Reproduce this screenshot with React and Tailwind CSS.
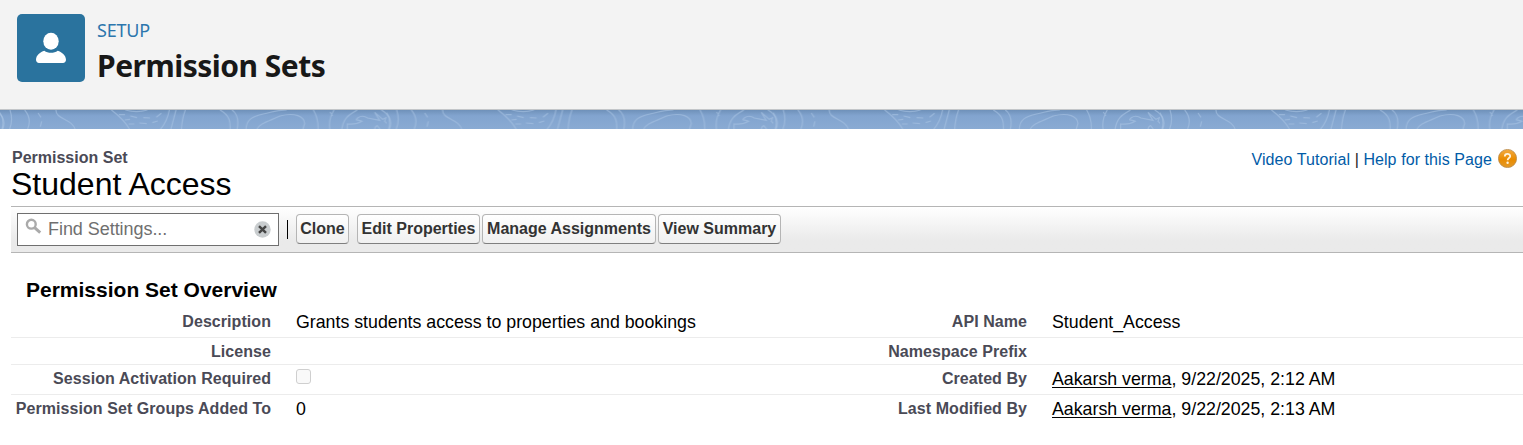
const FONT = 'font-["Liberation_Sans",Arial,sans-serif]';

function Contours() {
  return (
    <svg className="block h-full w-full" aria-hidden="true">
      <defs>
        <pattern id="contours" width="1160" height="60" patternUnits="userSpaceOnUse" patternTransform="scale(0.33333)">
          <g fill="none" stroke="#a9c3e2" strokeOpacity="0.6" strokeWidth="3.6">
            <path d="M0 8Q14 30 6 57M30 0Q40 30 29 57M74 0Q96 26 83 57" />
            <path d="M114 9l9 13M125 34l-4 16" />
            <path d="M168 0C166 28 218 26 226 60" />
            <path d="M334 0Q372 28 390 60M376 0Q410 10 442 0" />
            <path d="M357 14h18M391 18l20 5M430 23l20 1M374 30l16-2M386 42h17M418 39l22 2M457 38l16-5M469 22l15-12" />
            <path d="M508 0Q502 34 480 60M528 0L512 60M556 0Q546 26 544 60" />
            <path d="M660 0C690 16 692 38 690 60M696 0C716 14 716 36 711 60" />
            <path d="M738 60C738 28 758 19 790 12S824 1 860 0" />
            <path d="M769 60C778 40 806 34 840 18C886 6 912 20 914 40L908 60" />
            <path d="M940 0Q956 26 954 60M1002 0Q984 30 990 60M990 6l8 12" />
            <path d="M1025 60C1030 22 1048 14 1072 0M1144 0Q1184 24 1167 60" />
            <path d="M1042 60V42Q1068 45 1086 34C1072 28 1062 33 1074 23Q1088 14 1103 24L1139 31L1124 7L1148 28L1158 23L1154 34L1170 48M1124 60Q1124 50 1132 47L1142 60" />
            <path d="M-16 0Q24 24 7 60" />
          </g>
        </pattern>
      </defs>
      <rect width="100%" height="100%" fill="url(#contours)" />
    </svg>
  );
}

function Header() {
  return (
    <header className="flex h-[110px] items-start border-b border-[#c3c6c9] bg-[#f3f3f3] pt-[14px] pl-[17px]">
      <div className="h-[68px] w-[68px] rounded-[5px] bg-[#2a739e]">
        <svg viewBox="0 0 68 68" className="h-full w-full" fill="#fff">
          <ellipse cx="34" cy="27.3" rx="7.7" ry="8.5" />
          <path d="M27.3 36.7C31 39.4 37 39.4 40.7 36.7C44.5 38 49 41 49 45.8C49 47.8 47.7 49 46 49H22C20.3 49 19 47.8 19 45.8C19 41 23.5 38 27.3 36.7Z" />
        </svg>
      </div>
      <div className='ml-3 pt-[2px] font-["Noto_Sans",sans-serif]'>
        <div className="text-[18px] leading-[28px] tracking-[-0.2px] text-[#2c76ad]">SETUP</div>
        <h1 className="mt-[5px] text-[30px] leading-[33px] font-bold tracking-[-0.5px] whitespace-nowrap text-[#181818]">Permission Sets</h1>
      </div>
    </header>
  );
}

function ToolButton({ children, className }) {
  return (
    <button className={`h-[30px] shrink-0 rounded-[4px] border border-[#b5b5b5] border-b-[#7f7f7f] bg-linear-to-b from-white to-[#f0f0f0] pb-px text-center text-[16px] leading-[26px] font-bold whitespace-nowrap text-[#333] ${className}`}>
      {children}
    </button>
  );
}

function Toolbar() {
  return (
    <div className="ml-[11px] flex h-[47px] items-start border-y border-[#b5b5b5] bg-linear-to-b from-white to-[#eaeaea] to-75% pt-[6px] pl-[6px]">
      <div className="flex h-[33px] w-[262px] items-center border border-[#6f6f6f] bg-white pr-[7px] pl-[7px]">
        <svg viewBox="0 0 17 17" className="mb-[6px] h-[17px] w-[17px]" fill="none" stroke="#aaa">
          <circle cx="6.3" cy="6.2" r="4.4" strokeWidth="2.4" />
          <path d="M9.6 9.6l5.6 5" strokeWidth="3" />
        </svg>
        <span className="ml-[6px] flex-1 text-[18px] leading-[29px] tracking-[-0.05px] text-[#6f6f6f]">Find Settings...</span>
        <svg viewBox="0 0 17 17" className="mb-px h-[17px] w-[17px]">
          <circle cx="8.5" cy="8.5" r="8.2" fill="#c9cdcf" />
          <path d="M5 5.2l7 6.6M12 5.2l-7 6.6" stroke="#454545" strokeWidth="2.5" />
        </svg>
      </div>
      <div className="mt-[7px] ml-2 h-[19px] w-px bg-black" />
      <div className="mt-px ml-2 flex">
        <ToolButton className="w-[53px]">Clone</ToolButton>
        <ToolButton className="ml-2 w-[123px]">Edit Properties</ToolButton>
        <ToolButton className="ml-[2px] w-[174px]">Manage Assignments</ToolButton>
        <ToolButton className="ml-[2px] w-[123px]">View Summary</ToolButton>
      </div>
    </div>
  );
}

function Person({ when }) {
  return (
    <>
      <a className="underline decoration-1 underline-offset-2">Aakarsh verma</a>, {when}
    </>
  );
}

const ROWS = [
  { h: "h-[30px]", left: "Description", value: "Grants students access to properties and bookings", right: "API Name", rightValue: "Student_Access" },
  { h: "h-[27px]", left: "License", value: "", right: "Namespace Prefix", rightValue: "" },
  {
    h: "h-[30px]",
    left: "Session Activation Required",
    value: <span className="mt-[4px] block h-[15px] w-[15px] rounded-[3px] border border-[#cfcfcf] bg-[#f9f9f9]" />,
    right: "Created By",
    rightValue: <Person when="9/22/2025, 2:12 AM" />,
  },
  { h: "h-[30px]", left: "Permission Set Groups Added To", value: "0", right: "Last Modified By", rightValue: <Person when="9/22/2025, 2:13 AM" /> },
];

const LABEL = "text-right text-[16px] leading-[27px] font-bold tracking-[0.06px] text-[#4a4a56]";
const VALUE = "pl-[25px] text-[17.8px] leading-[28px] tracking-[-0.01px] text-black";

function Overview() {
  return (
    <section className="ml-[11px] pt-[24px]">
      <h3 className="pl-[15px] text-[21px] leading-[26px] font-bold text-black">Permission Set Overview</h3>
      <div className="mt-[5px]">
        {ROWS.map((r, i) => (
          <div key={r.left} className={`grid grid-cols-[260px_500px_256px_1fr] whitespace-nowrap ${r.h} ${i < 3 ? "border-b border-[#ececec]" : ""}`}>
            <div className={LABEL}>{r.left}</div>
            <div className={VALUE}>{r.value}</div>
            <div className={LABEL}>{r.right}</div>
            <div className={VALUE}>{r.rightValue}</div>
          </div>
        ))}
      </div>
    </section>
  );
}

export default function App() {
  return (
    <div className={`h-[445px] w-full overflow-hidden bg-white ${FONT}`}>
      <Header />
      <div className="h-[19px] bg-linear-to-b from-[#6f91b9] via-[#82a4cf] via-30% to-[#8aabd3]">
        <Contours />
      </div>
      <div className="flex h-[77px] justify-between pl-[11px]">
        <div className="pt-[19px]">
          <div className="pl-px text-[16px] leading-[20px] font-bold text-[#4a4a56]">Permission Set</div>
          <h2 className="-mt-px text-[32px] leading-[34px] text-black">Student Access</h2>
        </div>
        <div className="flex items-start pt-[20px] pr-[6px] text-[16px] leading-[22px] tracking-[0.08px] whitespace-nowrap text-[#015ba7]">
          <a>Video Tutorial</a>
          <span className="px-[4.5px] text-[#222]">|</span>
          <a>Help for this Page</a>
          <svg viewBox="0 0 19 19" className="ml-[6px] h-[19px] w-[19px]">
            <defs>
              <linearGradient id="help" x1="0" y1="0" x2="0" y2="1">
                <stop offset="0" stopColor="#f4ab40" />
                <stop offset="0.55" stopColor="#e98b00" />
                <stop offset="1" stopColor="#e49a28" />
              </linearGradient>
            </defs>
            <circle cx="9.5" cy="9.5" r="9.1" fill="url(#help)" stroke="#b98a4b" strokeWidth="0.8" />
            <path d="M6.8 7.4C6.8 4.2 12.2 4.2 12.2 7.2C12.2 9.2 9.6 9 9.6 11.3" fill="none" stroke="#fff3dc" strokeWidth="1.8" />
            <circle cx="9.6" cy="13.8" r="1.2" fill="#fff3dc" />
          </svg>
        </div>
      </div>
      <Toolbar />
      <Overview />
    </div>
  );
}
